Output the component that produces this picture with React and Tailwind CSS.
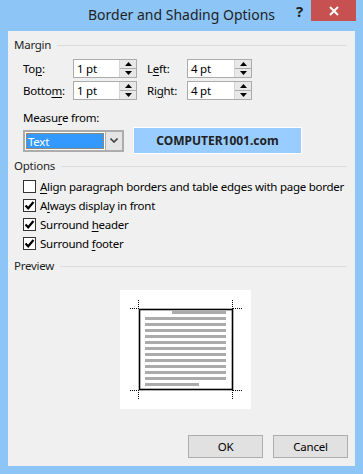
import React from 'react';

// little access-key underline
function K({ children }) {
  return <span className="underline underline-offset-2">{children}</span>;
}

function Spin({ value, wide }) {
  return (
    <div className={`flex h-[19px] border border-[#ababab] bg-white ${wide ? 'w-[65px]' : 'w-[64px]'}`}>
      <div className="flex-1 pl-[3px] leading-[17px] text-black">{value}</div>
      <div className="flex w-[17px] flex-col border-l border-[#d4d4d4]">
        <div className="flex flex-1 items-center justify-center border-b border-[#acacac] bg-[#e8e8e8]">
          <svg width="7" height="4" viewBox="0 0 7 4"><path d="M0 4 L3.5 0 L7 4 Z" fill="#000" /></svg>
        </div>
        <div className="flex flex-1 items-center justify-center bg-[#e8e8e8]">
          <svg width="7" height="4" viewBox="0 0 7 4"><path d="M0 0 L7 0 L3.5 4 Z" fill="#000" /></svg>
        </div>
      </div>
    </div>
  );
}

function Group({ title }) {
  return (
    <div className="flex h-[18px] items-center gap-[6px] pl-[6px] pr-[8px]">
      <span className="text-[#1e1e1e]">{title}</span>
      <div className="h-px flex-1 bg-[#dcdcdc]" />
    </div>
  );
}

function Check({ checked, children }) {
  return (
    <div className="flex h-[19px] items-center pl-[15px]">
      <div className="flex h-[13px] w-[13px] shrink-0 items-center justify-center border border-[#333] bg-white">
        {checked && (
          <svg width="11" height="11" viewBox="0 0 11 11">
            <path d="M1.5 5.5 L4.2 8.3 L9.5 2" stroke="#000" strokeWidth="2.2" fill="none" />
          </svg>
        )}
      </div>
      <span className="ml-[4px] whitespace-nowrap text-black">{children}</span>
    </div>
  );
}

function PagePreview() {
  const ys = [];
  for (let i = 1; i < 12; i++) ys.push(21 + i * 6);
  return (
    <svg width="131" height="119" viewBox="0 0 131 119">
      <rect x="0" y="0" width="131" height="119" fill="#fff" />
      <rect x="52" y="21" width="54" height="3" fill="#ababab" />
      {ys.map((y) => (
        <rect key={y} x="25" y={y} width="81" height="3" fill="#ababab" />
      ))}
      <rect x="25" y="93" width="54" height="3" fill="#ababab" />
      <rect x="19.5" y="19.5" width="93" height="80" fill="none" stroke="#000" strokeWidth="1.6" />
      <g stroke="#000" strokeWidth="1" strokeDasharray="1 1" fill="none">
        <path d="M10 18.5 H19" />
        <path d="M18.5 10 V19" />
        <path d="M113 18.5 H122" />
        <path d="M112.5 10 V19" />
        <path d="M10 100.5 H19" />
        <path d="M18.5 100 V109" />
        <path d="M113 100.5 H122" />
        <path d="M112.5 100 V109" />
      </g>
    </svg>
  );
}

export default function App() {
  return (
    <div className="flex h-[474px] w-[363px] flex-col bg-[#8cc5f6] font-['Noto_Sans',sans-serif] text-[11.5px] tracking-[-0.25px] text-black">
      {/* title bar */}
      <div className="flex h-[31px] shrink-0">
        <div className="flex-1" />
        <div className="whitespace-nowrap pt-[4px] text-[14px] leading-[22px] tracking-normal text-[#1f1f1f]">Border and Shading Options</div>
        <div className="flex flex-1 justify-end">
          <div className="mr-[8px] pt-[1px] text-[15px] font-bold leading-[20px] text-[#222]">?</div>
          <div className="mr-[7px] flex h-[21px] w-[45px] items-center justify-center bg-[#c75050]">
            <svg width="10" height="10" viewBox="0 0 10 10">
              <path d="M1 1 L9 9 M9 1 L1 9" stroke="#fff" strokeWidth="2" />
            </svg>
          </div>
        </div>
      </div>

      {/* client area */}
      <div className="mx-[8px] mb-[8px] flex flex-1 flex-col bg-[#f0f0f0] pt-[5px]">
        <Group title="Margin" />
        <div className="mt-[5px] flex flex-col gap-[3px] pl-[15px]">
          <div className="flex items-center">
            <span className="w-[50px]">To<K>p</K>:</span>
            <Spin value="1 pt" />
            <span className="ml-[10px] w-[40px]">L<K>e</K>ft:</span>
            <Spin value="4 pt" wide />
          </div>
          <div className="flex items-center">
            <span className="w-[50px]">Botto<K>m</K>:</span>
            <Spin value="1 pt" />
            <span className="ml-[10px] w-[40px]">Ri<K>g</K>ht:</span>
            <Spin value="4 pt" wide />
          </div>
        </div>

        <div className="mt-[9px] pl-[15px] leading-[18px]">Measu<K>r</K>e from:</div>
        <div className="flex items-center pl-[15px]">
          <div className="flex h-[22px] w-[101px] border-2 border-[#acacac] bg-white">
            <div className="flex flex-1 items-center p-px">
              <div className="h-full w-full border border-dotted border-[#e07a10] bg-[#3399ff] pl-[1px] leading-[15px] text-white">Text</div>
            </div>
            <div className="flex w-[17px] items-center justify-center border-l border-[#acacac] bg-[#e5e5e5]">
              <svg width="8" height="5" viewBox="0 0 8 5"><path d="M0.5 0.5 L4 4 L7.5 0.5" stroke="#444" strokeWidth="1.6" fill="none" /></svg>
            </div>
          </div>
          <div className="ml-[9px] flex h-[27px] w-[169px] items-center justify-center border border-white bg-[#99ccff] text-[12px] font-bold tracking-normal text-[#222]">
            COMPUTER1001.com
          </div>
        </div>

        <div className="mt-[3px]">
          <Group title="Options" />
        </div>
        <div className="mt-[2px] flex flex-col">
          <Check><K>A</K>lign paragraph borders and table edges with page border</Check>
          <Check checked>A<K>l</K>ways display in front</Check>
          <Check checked>Surround <K>h</K>eader</Check>
          <Check checked>Surround <K>f</K>ooter</Check>
        </div>

        <div className="mt-[4px]">
          <Group title="Preview" />
        </div>
        <div className="mt-[15px] pl-[112px]">
          <PagePreview />
        </div>

        <div className="mt-auto flex justify-end gap-[10px] pb-[8px] pr-[7px]">
          <div className="flex h-[23px] w-[75px] items-center justify-center border border-[#adadad] bg-[#e1e1e1]">OK</div>
          <div className="flex h-[23px] w-[75px] items-center justify-center border border-[#adadad] bg-[#e1e1e1]">Cancel</div>
        </div>
      </div>
    </div>
  );
}
